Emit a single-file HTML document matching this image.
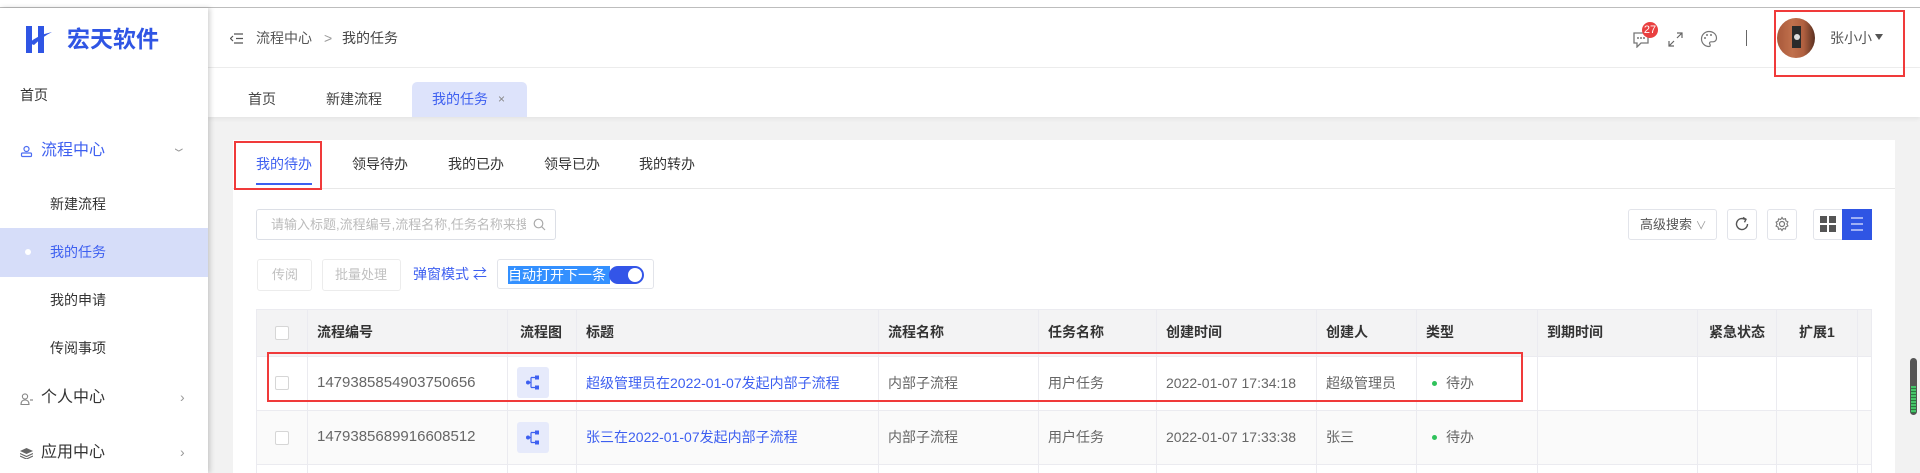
<!DOCTYPE html>
<html><head><meta charset="utf-8"><style>
*{margin:0;padding:0;box-sizing:border-box}
body{width:1920px;height:473px;overflow:hidden;background:#f2f2f2;font-family:"Liberation Sans","Noto Sans CJK SC",sans-serif;font-size:14px;color:#333;position:relative}
.a{position:absolute}
.t{position:absolute;white-space:nowrap;line-height:20px}
.red{position:absolute;border:2px solid #f03a3a}
.hd{font-weight:bold;color:#333}
.cell{color:#666}
.vl{position:absolute;width:1px;background:#ebebf0}
.hl{position:absolute;height:1px;background:#ebebf0}
.chk{position:absolute;width:14px;height:14px;border:1px solid #d6d6d6;border-radius:2px;background:#fff}
.btn{position:absolute;border:1px solid #e2e4ea;border-radius:3px;background:#fff}
</style></head><body>
<!-- top strip -->
<div class="a" style="left:0;top:0;width:1920px;height:7px;background:#fff"></div>
<div class="a" style="left:0;top:7px;width:1920px;height:1px;background:#bdbdbd"></div>
<!-- header -->
<div class="a" style="left:208px;top:8px;width:1712px;height:60px;background:#fff;border-bottom:1px solid #eeeeee"></div>
<div class="a" style="left:208px;top:68px;width:1712px;height:49px;background:#fff;box-shadow:0 2px 4px rgba(0,0,0,.06)"></div>
<!-- sidebar -->
<div class="a" style="left:0;top:8px;width:208px;height:465px;background:#fff;box-shadow:2px 0 5px rgba(0,0,0,.18)"></div>
<svg class="a" style="left:26px;top:26px" width="26" height="27" viewBox="0 0 26 27"><path d="M0 0h6v27H0z M12 0h6v27h-6z" fill="#2f55e4"/><path d="M3 17 Q12 9 26 6 Q16 11 8 19z" fill="#2f55e4"/></svg>
<div class="t" style="left:67px;top:27px;font-size:23px;line-height:24px;font-weight:bold;color:#2f55e4">宏天软件</div>
<div class="t" style="left:20px;top:85px;color:#333">首页</div>
<svg class="a" style="left:20px;top:145px" width="13" height="13" viewBox="0 0 13 13"><circle cx="6.5" cy="4" r="2.5" fill="none" stroke="#4e6ef2" stroke-width="1.2"/><rect x="1.5" y="8" width="10" height="3.5" rx="1" fill="none" stroke="#4e6ef2" stroke-width="1.2"/></svg>
<div class="t" style="left:41px;top:141px;font-size:16px;color:#3d5ff0">流程中心</div>
<div class="t" style="left:178px;top:140px;color:#999;font-size:12px;transform:rotate(90deg) scaleY(1.6)">›</div>
<div class="t" style="left:50px;top:194px">新建流程</div>
<div class="a" style="left:0;top:228px;width:208px;height:49px;background:#d6ddf9"></div>
<div class="a" style="left:25px;top:249px;width:6px;height:6px;border-radius:50%;background:#fff"></div>
<div class="t" style="left:50px;top:242px;color:#3d5ff0">我的任务</div>
<div class="t" style="left:50px;top:290px">我的申请</div>
<div class="t" style="left:50px;top:338px">传阅事项</div>
<svg class="a" style="left:20px;top:393px" width="13" height="12" viewBox="0 0 13 12"><circle cx="5" cy="3.5" r="2.6" fill="none" stroke="#888" stroke-width="1.1"/><path d="M1 11.5 Q1 7 5 7 Q9 7 9 11.5z" fill="none" stroke="#888" stroke-width="1.1"/><path d="M10 7h3" stroke="#888" stroke-width="1.2"/></svg>
<div class="t" style="left:41px;top:388px;font-size:16px;color:#333">个人中心</div>
<div class="t" style="left:180px;top:387px;color:#999;font-size:14px">›</div>
<svg class="a" style="left:20px;top:448px" width="13" height="11" viewBox="0 0 13 11"><path d="M6.5 0L13 3 6.5 6 0 3z" fill="#666"/><path d="M0 5.5L6.5 8.5 13 5.5 M0 8L6.5 11 13 8" fill="none" stroke="#666" stroke-width="1.2"/></svg>
<div class="t" style="left:41px;top:443px;font-size:16px;color:#333">应用中心</div>
<div class="t" style="left:180px;top:442px;color:#999;font-size:14px">›</div>

<!-- breadcrumb -->
<svg class="a" style="left:230px;top:33px" width="13" height="11" viewBox="0 0 13 11"><path d="M4 1h9M6 5.5h7M4 10h9" stroke="#555" stroke-width="1.3"/><path d="M3 3L0.5 5.5 3 8" fill="none" stroke="#555" stroke-width="1.2"/></svg>
<div class="t" style="left:256px;top:28px;color:#555">流程中心</div>
<div class="t" style="left:324px;top:28px;color:#999">&gt;</div>
<div class="t" style="left:342px;top:28px;color:#444">我的任务</div>

<!-- header right -->
<svg class="a" style="left:1632px;top:31px" width="18" height="17" viewBox="0 0 18 17"><path d="M2 2h14v10H9l-4 4v-4H2z" fill="none" stroke="#777" stroke-width="1.3"/><circle cx="6" cy="7" r="1" fill="#777"/><circle cx="9" cy="7" r="1" fill="#777"/><circle cx="12" cy="7" r="1" fill="#777"/></svg>
<div class="a" style="left:1642px;top:22px;width:16px;height:16px;border-radius:50%;background:#e94040;color:#fff;font-size:11px;line-height:16px;text-align:center">27</div>
<svg class="a" style="left:1668px;top:32px" width="15" height="15" viewBox="0 0 15 15"><path d="M9 1h5v5M14 1L9 6M6 14H1V9M1 14l5-5" fill="none" stroke="#666" stroke-width="1.2"/></svg>
<svg class="a" style="left:1700px;top:30px" width="18" height="18" viewBox="0 0 18 18"><path d="M9 1.5A7.5 7.5 0 0 0 9 16.5c1.5 0 1.5-1.5 0.8-2.5-0.7-1 0-2.2 1.2-2.2H13a3.5 3.5 0 0 0 3.5-3.5C16.5 4.5 13.5 1.5 9 1.5z" fill="none" stroke="#777" stroke-width="1.2"/><circle cx="5" cy="8" r="1" fill="#777"/><circle cx="7" cy="5" r="1" fill="#777"/><circle cx="11" cy="5" r="1" fill="#777"/></svg>
<div class="a" style="left:1746px;top:30px;width:1px;height:16px;background:#666"></div>
<div class="a" style="left:1777px;top:18px;width:38px;height:40px;border-radius:50%;background:linear-gradient(90deg,#a8583a,#c0704c 40%,#b06040 70%,#5a3020);overflow:hidden"><div style="position:absolute;left:15px;top:8px;width:9px;height:22px;background:#2a2a2a"></div><div style="position:absolute;left:17px;top:16px;width:6px;height:6px;border-radius:50%;background:#ddd"></div></div>
<div class="t" style="left:1830px;top:28px;color:#555;font-size:14px">张小小</div>
<div class="a" style="left:1875px;top:34px;width:0;height:0;border-left:4px solid transparent;border-right:4px solid transparent;border-top:6px solid #555"></div>
<div class="red" style="left:1774px;top:10px;width:131px;height:67px"></div>

<!-- tabs bar -->
<div class="t" style="left:248px;top:89px;color:#444">首页</div>
<div class="t" style="left:326px;top:89px;color:#444">新建流程</div>
<div class="a" style="left:412px;top:82px;width:115px;height:35px;background:#dde3fb;border-radius:5px 5px 0 0"></div>
<div class="t" style="left:432px;top:89px;color:#3d5ff0">我的任务</div>
<div class="t" style="left:498px;top:89px;color:#888;font-size:12px">×</div>

<!-- card -->
<div class="a" style="left:233px;top:140px;width:1662px;height:333px;background:#fff"></div>
<div class="a" style="left:233px;top:188px;width:1662px;height:1px;background:#e8e8e8"></div>
<div class="t" style="left:256px;top:154px;color:#3d5ff0">我的待办</div>
<div class="a" style="left:256px;top:183px;width:56px;height:2px;background:#3d5ff0"></div>
<div class="red" style="left:234px;top:141px;width:88px;height:49px"></div>
<div class="t" style="left:352px;top:154px">领导待办</div>
<div class="t" style="left:448px;top:154px">我的已办</div>
<div class="t" style="left:544px;top:154px">领导已办</div>
<div class="t" style="left:639px;top:154px">我的转办</div>

<!-- search -->
<div class="btn" style="left:256px;top:209px;width:300px;height:31px;border-color:#dcdfe6"></div>
<div class="t" style="left:271px;top:215px;color:#bbb;font-size:13px;width:255px;overflow:hidden">请输入标题,流程编号,流程名称,任务名称来搜</div>
<svg class="a" style="left:533px;top:218px" width="13" height="13" viewBox="0 0 13 13"><circle cx="5.5" cy="5.5" r="4.3" fill="none" stroke="#aaa" stroke-width="1.2"/><path d="M8.7 8.7L12 12" stroke="#aaa" stroke-width="1.2"/></svg>

<div class="btn" style="left:1628px;top:209px;width:89px;height:31px"></div>
<div class="t" style="left:1640px;top:215px;color:#555;font-size:13px">高级搜索 <span style="color:#999;font-size:11px">∨</span></div>
<div class="btn" style="left:1727px;top:209px;width:30px;height:31px"></div>
<svg class="a" style="left:1734px;top:216px" width="16" height="16" viewBox="0 0 16 16"><path d="M13.5 8A5.5 5.5 0 1 1 11 3.4" fill="none" stroke="#555" stroke-width="1.4"/><path d="M9 1.5l3 1.8-1.5 3" fill="none" stroke="#555" stroke-width="1.4"/></svg>
<div class="btn" style="left:1767px;top:209px;width:30px;height:31px"></div>
<svg class="a" style="left:1774px;top:216px" width="16" height="16" viewBox="0 0 16 16"><circle cx="8" cy="8" r="2.5" fill="none" stroke="#777" stroke-width="1.2"/><path d="M8 1.5l1.3 1.8 2.2-.6.4 2.2 2 1-1 2 1 2-2 1-.4 2.2-2.2-.6L8 14.5l-1.3-1.8-2.2.6-.4-2.2-2-1 1-2-1-2 2-1 .4-2.2 2.2.6z" fill="none" stroke="#777" stroke-width="1.1"/></svg>
<div class="btn" style="left:1813px;top:209px;width:59px;height:31px"></div>
<div class="a" style="left:1820px;top:216px;width:7px;height:7px;background:#555"></div>
<div class="a" style="left:1829px;top:216px;width:7px;height:7px;background:#555"></div>
<div class="a" style="left:1820px;top:225px;width:7px;height:7px;background:#555"></div>
<div class="a" style="left:1829px;top:225px;width:7px;height:7px;background:#555"></div>
<div class="a" style="left:1842px;top:209px;width:30px;height:31px;background:#2f55e4"></div>
<div class="a" style="left:1851px;top:217px;width:12px;height:2px;background:#9fb0f5"></div>
<div class="a" style="left:1851px;top:223px;width:12px;height:2px;background:#9fb0f5"></div>
<div class="a" style="left:1851px;top:229px;width:12px;height:2px;background:#9fb0f5"></div>

<!-- action buttons -->
<div class="btn" style="left:257px;top:259px;width:55px;height:32px;border-color:#ececec"></div>
<div class="t" style="left:272px;top:265px;color:#c0c0c0;font-size:13px">传阅</div>
<div class="btn" style="left:322px;top:259px;width:79px;height:32px;border-color:#ececec"></div>
<div class="t" style="left:335px;top:265px;color:#c0c0c0;font-size:13px">批量处理</div>
<div class="t" style="left:413px;top:264px;color:#3d5ff0">弹窗模式 ⇄</div>
<div class="btn" style="left:497px;top:259px;width:157px;height:30px"></div>
<div class="a" style="left:508px;top:266px;width:102px;height:18px;background:#3390ff"></div>
<div class="t" style="left:508px;top:265px;color:#fff">自动打开下一条</div>
<div class="a" style="left:609px;top:266px;width:35px;height:18px;border-radius:9px;background:#3355e8"></div>
<div class="a" style="left:628px;top:268px;width:14px;height:14px;border-radius:50%;background:#fff"></div>

<!-- table -->
<div class="a" style="left:256px;top:309px;width:1615px;height:47px;background:#f3f3f4;border-top:1px solid #ebebf0"></div>
<div class="a" style="left:256px;top:410px;width:1615px;height:54px;background:#fafafa"></div>
<div class="hl" style="left:256px;top:356px;width:1615px"></div>
<div class="hl" style="left:256px;top:410px;width:1615px"></div>
<div class="hl" style="left:256px;top:464px;width:1615px"></div>
<div class="vl" style="left:256px;top:309px;height:164px"></div>
<div class="vl" style="left:307px;top:309px;height:164px"></div>
<div class="vl" style="left:507px;top:309px;height:164px"></div>
<div class="vl" style="left:576px;top:309px;height:164px"></div>
<div class="vl" style="left:878px;top:309px;height:164px"></div>
<div class="vl" style="left:1038px;top:309px;height:164px"></div>
<div class="vl" style="left:1156px;top:309px;height:164px"></div>
<div class="vl" style="left:1316px;top:309px;height:164px"></div>
<div class="vl" style="left:1416px;top:309px;height:164px"></div>
<div class="vl" style="left:1537px;top:309px;height:164px"></div>
<div class="vl" style="left:1697px;top:309px;height:164px"></div>
<div class="vl" style="left:1776px;top:309px;height:164px"></div>
<div class="vl" style="left:1857px;top:309px;height:164px"></div>
<div class="vl" style="left:1871px;top:309px;height:164px"></div>

<div class="chk" style="left:275px;top:326px"></div>
<div class="t hd" style="left:317px;top:322px">流程编号</div>
<div class="t hd" style="left:520px;top:322px">流程图</div>
<div class="t hd" style="left:586px;top:322px">标题</div>
<div class="t hd" style="left:888px;top:322px">流程名称</div>
<div class="t hd" style="left:1048px;top:322px">任务名称</div>
<div class="t hd" style="left:1166px;top:322px">创建时间</div>
<div class="t hd" style="left:1326px;top:322px">创建人</div>
<div class="t hd" style="left:1426px;top:322px">类型</div>
<div class="t hd" style="left:1547px;top:322px">到期时间</div>
<div class="t hd" style="left:1709px;top:322px">紧急状态</div>
<div class="t hd" style="left:1799px;top:322px">扩展1</div>

<!-- row1 -->
<div class="chk" style="left:275px;top:376px"></div>
<div class="t cell" style="left:317px;top:373px;font-size:15px">1479385854903750656</div>
<div class="a" style="left:517px;top:367px;width:32px;height:31px;background:#e6eafb;border-radius:3px"></div>
<svg class="a" style="left:526px;top:375px" width="14" height="15" viewBox="0 0 14 15"><circle cx="2" cy="7.5" r="2" fill="#3d5ff0"/><path d="M2 7.5h3M5 2.5v10M5 2.5h4M5 12.5h4" stroke="#3d5ff0" stroke-width="1.2" fill="none"/><rect x="9" y="0.5" width="4" height="4" fill="#3d5ff0"/><rect x="9" y="10.5" width="4" height="4" fill="#3d5ff0"/></svg>
<div class="t" style="left:586px;top:373px;color:#3d5ff0">超级管理员在2022-01-07发起内部子流程</div>
<div class="t cell" style="left:888px;top:373px">内部子流程</div>
<div class="t cell" style="left:1048px;top:373px">用户任务</div>
<div class="t cell" style="left:1166px;top:373px">2022-01-07 17:34:18</div>
<div class="t cell" style="left:1326px;top:373px">超级管理员</div>
<div class="a" style="left:1432px;top:381px;width:5px;height:5px;border-radius:50%;background:#2fc25b"></div>
<div class="t cell" style="left:1446px;top:373px">待办</div>
<div class="red" style="left:267px;top:352px;width:1256px;height:50px"></div>

<!-- row2 -->
<div class="chk" style="left:275px;top:431px"></div>
<div class="t cell" style="left:317px;top:427px;font-size:15px">1479385689916608512</div>
<div class="a" style="left:517px;top:422px;width:32px;height:31px;background:#e6eafb;border-radius:3px"></div>
<svg class="a" style="left:526px;top:430px" width="14" height="15" viewBox="0 0 14 15"><circle cx="2" cy="7.5" r="2" fill="#3d5ff0"/><path d="M2 7.5h3M5 2.5v10M5 2.5h4M5 12.5h4" stroke="#3d5ff0" stroke-width="1.2" fill="none"/><rect x="9" y="0.5" width="4" height="4" fill="#3d5ff0"/><rect x="9" y="10.5" width="4" height="4" fill="#3d5ff0"/></svg>
<div class="t" style="left:586px;top:427px;color:#3d5ff0">张三在2022-01-07发起内部子流程</div>
<div class="t cell" style="left:888px;top:427px">内部子流程</div>
<div class="t cell" style="left:1048px;top:427px">用户任务</div>
<div class="t cell" style="left:1166px;top:427px">2022-01-07 17:33:38</div>
<div class="t cell" style="left:1326px;top:427px">张三</div>
<div class="a" style="left:1432px;top:435px;width:5px;height:5px;border-radius:50%;background:#2fc25b"></div>
<div class="t cell" style="left:1446px;top:427px">待办</div>

<!-- scrollbar -->
<div class="a" style="left:1910px;top:358px;width:7px;height:57px;border-radius:4px;background:#555"></div>
<div class="a" style="left:1911px;top:386px;width:5px;height:27px;background:repeating-linear-gradient(#46c46a 0 2px,#2a7a40 2px 3px)"></div>
</body></html>
